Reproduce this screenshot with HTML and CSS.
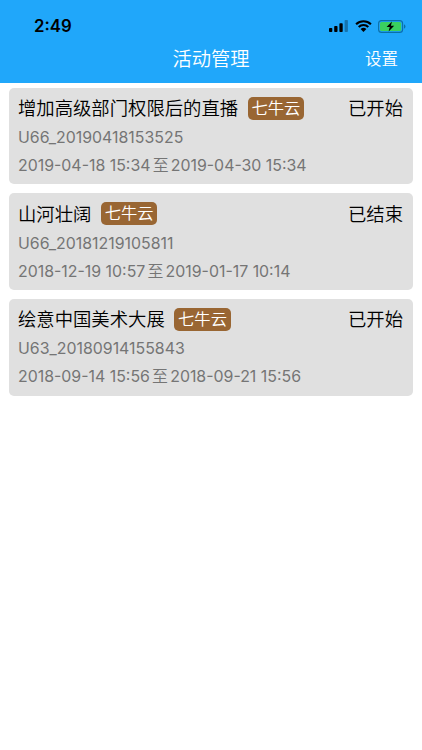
FILE: index.html
```html
<!DOCTYPE html>
<html lang="zh-CN">
<head>
    <meta charset="UTF-8">
    <meta name="viewport" content="width=device-width, initial-scale=1.0">
    <title>活动管理</title>
    <link rel="stylesheet" href="styles.css">
</head>
<body>
    <header class="header">
        <div class="status-bar">
            <span class="time">2:49</span>
            <div class="status-icons">
                <svg class="signal" width="19" height="12" viewBox="0 0 19 12">
                    <rect x="0" y="8" width="3.3" height="4" rx="0.8"/>
                    <rect x="5.2" y="6" width="3.3" height="6" rx="0.8"/>
                    <rect x="10.4" y="3.2" width="3.3" height="8.8" rx="0.8"/>
                    <rect x="15.6" y="0" width="3.3" height="12" rx="0.8" opacity="0.3"/>
                </svg>
                <svg class="wifi" width="17" height="12" viewBox="0 0 17 12">
                    <path d="M1.1 4.3a10.6 10.6 0 0 1 14.8 0M3.7 7a6.9 6.9 0 0 1 9.6 0" fill="none" stroke="#000" stroke-width="2.1"/>
                    <path d="M5.6 9.1a4.2 4.2 0 0 1 5.8 0L8.5 12z"/>
                </svg>
                <svg class="battery" width="28" height="13" viewBox="0 0 28 13">
                    <rect x="0.6" y="0.6" width="24" height="11.8" rx="3" fill="none" stroke="#0b6fa8" stroke-width="1.1"/>
                    <rect x="2" y="2" width="21.2" height="9" rx="1.6" fill="#3ad15f"/>
                    <path d="M26 4.3c2 .8 2 3.6 0 4.4z" fill="#0b6fa8"/>
                    <path d="M14 1.6L8.6 7.1h3.2l-1.2 4.4 5.6-5.7h-3.3z"/>
                </svg>
            </div>
        </div>
        <div class="nav-bar">
            <h1>活动管理</h1>
            <a class="settings">设置</a>
        </div>
    </header>

    <main class="list">
        <div class="card">
            <div class="card-top">
                <span class="title">增加高级部门权限后的直播</span>
                <span class="tag">七牛云</span>
                <span class="state">已开始</span>
            </div>
            <div class="code">U66_20190418153525</div>
            <div class="period">
                <span>2019-04-18 15:34</span>
                <span class="to">至</span>
                <span>2019-04-30 15:34</span>
            </div>
        </div>
        <div class="card">
            <div class="card-top">
                <span class="title">山河壮阔</span>
                <span class="tag">七牛云</span>
                <span class="state">已结束</span>
            </div>
            <div class="code">U66_20181219105811</div>
            <div class="period">
                <span>2018-12-19 10:57</span>
                <span class="to">至</span>
                <span>2019-01-17 10:14</span>
            </div>
        </div>
        <div class="card">
            <div class="card-top">
                <span class="title">绘意中国美术大展</span>
                <span class="tag">七牛云</span>
                <span class="state">已开始</span>
            </div>
            <div class="code">U63_20180914155843</div>
            <div class="period">
                <span>2018-09-14 15:56</span>
                <span class="to">至</span>
                <span>2018-09-21 15:56</span>
            </div>
        </div>
    </main>
</body>
</html>
```
FILE: styles.css
```css
* {
    box-sizing: border-box;
}

body {
    margin: 0;
    min-height: 100vh;
    background-color: #fff;
    font-family: Inter, "Noto Sans CJK SC", sans-serif;
}

.header {
    height: 83px;
    background-color: #20a7fa;
}

.status-bar {
    display: flex;
    justify-content: space-between;
    height: 39px;
    padding: 13px 16px 0 34px;
}

.time {
    font-size: 16.8px;
    font-weight: 600;
    line-height: 26px;
}

.status-icons {
    display: flex;
    align-items: center;
    gap: 7px;
    height: 26px;
}

.battery {
    margin-left: -1px;
}

.nav-bar {
    display: grid;
    grid-template-columns: 1fr auto 1fr;
    align-items: center;
    height: 40px;
    padding: 0 24px;
    color: #fff;
    font-weight: 350;
}

.nav-bar h1 {
    grid-column: 2;
    margin: 0;
    font-size: 19.3px;
    font-weight: 350;
    line-height: 28px;
}

.settings {
    justify-self: end;
    font-size: 16.5px;
    line-height: 28px;
}

.list {
    display: flex;
    flex-direction: column;
    gap: 9.2px;
    padding: 4.8px 9px;
}

.card {
    height: 96.5px;
    padding: 8.3px 10px 0 9px;
    border-radius: 5px;
    background-color: #e0e0e0;
}

.card-top {
    display: flex;
    align-items: center;
    height: 24px;
    font-size: 18.35px;
    font-weight: 350;
    line-height: 24px;
}

.tag {
    width: 56.5px;
    height: 23px;
    margin-left: 9.5px;
    border-radius: 5px;
    background-color: #996633;
    color: #fff;
    font-size: 16.3px;
    line-height: 23px;
    text-align: center;
}

.state {
    margin-left: auto;
}

.code,
.period {
    height: 28px;
    color: #757575;
    font-size: 15.9px;
    line-height: 28px;
}

.code {
    margin-top: 3.8px;
}

.period {
    display: flex;
    gap: 2.2px;
}

.to {
    font-weight: 350;
}
```
